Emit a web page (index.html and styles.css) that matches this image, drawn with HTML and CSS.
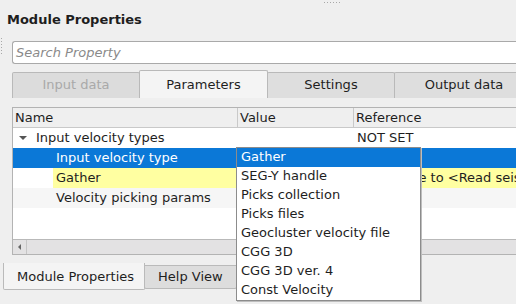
FILE: index.html
```html
<!DOCTYPE html>
<html>
<head>
<meta charset="utf-8">
<link rel="stylesheet" href="styles.css">
</head>
<body>
<div class="handle-top"></div>
<div class="handle-left"></div>
<div class="title">Module Properties</div>
<div class="search"><span class="placeholder">Search Property</span></div>
<div class="tabs">
  <div class="tab disabled">Input data</div>
  <div class="tab selected">Parameters</div>
  <div class="tab">Settings</div>
  <div class="tab last">Output data</div>
</div>
<div class="table">
  <div class="header">
    <div class="col c-name">Name</div>
    <div class="col c-value">Value</div>
    <div class="col c-ref">Reference</div>
  </div>
  <div class="row">
    <div class="col c-name"><span class="arrow"></span><span class="lvl1">Input velocity types</span></div>
    <div class="col c-value"></div>
    <div class="col c-ref">NOT SET</div>
  </div>
  <div class="row sel">
    <div class="col c-name"><span class="lvl2">Input velocity type</span></div>
    <div class="col c-value"></div>
    <div class="col c-ref"></div>
  </div>
  <div class="row">
    <div class="col c-name"><span class="lvl2 yellow-pad"></span><span class="yellow">Gather</span></div>
    <div class="col c-value yellow"></div>
    <div class="col c-ref yellow ref-link">Reference to &lt;Read seis</div>
  </div>
  <div class="row alt">
    <div class="col c-name"><span class="lvl2">Velocity picking params</span></div>
    <div class="col c-value"></div>
    <div class="col c-ref"></div>
  </div>
  <div class="spacer"></div>
  <div class="hscroll">
    <div class="sbtn"><span class="larrow"></span></div>
  </div>
</div>
<div class="btabs">
  <div class="btab selected">Module Properties</div>
  <div class="btab">Help View</div>
  <div class="btab hidden-tab"></div>
</div>
<ul class="popup">
  <li class="hl">Gather</li>
  <li>SEG-Y handle</li>
  <li>Picks collection</li>
  <li>Picks files</li>
  <li>Geocluster velocity file</li>
  <li>CGG 3D</li>
  <li>CGG 3D ver. 4</li>
  <li>Const Velocity</li>
</ul>
</body>
</html>
```

FILE: styles.css
```css
html, body {
  margin: 0;
  padding: 0;
}
body {
  width: 516px;
  height: 304px;
  overflow: hidden;
  position: relative;
  background: #efefef;
  font-family: "DejaVu Sans", "Liberation Sans", sans-serif;
  font-size: 13px;
  color: #1e1e1e;
}
.handle-top {
  position: absolute;
  left: 324px;
  top: 2px;
  width: 17px;
  height: 1px;
  background: repeating-linear-gradient(90deg, #a8a8a8 0 1px, transparent 1px 3px);
}
.handle-left {
  position: absolute;
  left: 1px;
  top: 38px;
  width: 1px;
  height: 17px;
  background: repeating-linear-gradient(180deg, #a8a8a8 0 1px, transparent 1px 3px);
}
.title {
  padding: 12px 0 0 7px;
  font-weight: bold;
  line-height: 15px;
  height: 15px;
}
.search {
  margin: 14px 0 0 12px;
  width: 504px;
  height: 23px;
  box-sizing: border-box;
  border: 1px solid #a9a9a9;
  border-right: none;
  border-radius: 3px 0 0 3px;
  background: #fff;
  line-height: 21px;
  padding-left: 3px;
}
.placeholder {
  font-style: italic;
  color: #8a8a8a;
}
.tabs {
  display: flex;
  align-items: flex-end;
  margin: 6px 0 0 12px;
  height: 28px;
  width: 504px;
  overflow: hidden;
}
.tab {
  width: 128px;
  height: 26px;
  box-sizing: border-box;
  border: 1px solid #b9b9b9;
  border-bottom: none;
  border-radius: 2px 2px 0 0;
  background: #dedede;
  text-align: center;
  line-height: 24px;
  margin-right: -1px;
  flex: none;
}
.tab.disabled {
  color: #a9a9a9;
  background: #dcdcdc;
}
.tab.selected {
  height: 28px;
  width: 129px;
  background: #f4f4f4;
  line-height: 27px;
  position: relative;
  z-index: 1;
}
.tab.last {
  width: 140px;
}
.table {
  margin: 9px 0 0 12px;
  width: 504px;
  height: 148px;
  box-sizing: border-box;
  border: 1px solid #b3b3b3;
  border-right: none;
  background: #fff;
  display: flex;
  flex-direction: column;
  overflow: hidden;
}
.header {
  display: flex;
  height: 20px;
  box-sizing: border-box;
  border-bottom: 1px solid #c9c9c9;
  background: #efefef;
  line-height: 19px;
  flex: none;
}
.header .col {
  padding-left: 2px;
}
.header .c-name, .header .c-value {
  border-right: 1px solid #c9c9c9;
}
.col {
  box-sizing: border-box;
  white-space: nowrap;
  overflow: hidden;
  flex: none;
}
.c-name { width: 225px; }
.c-value { width: 116px; }
.c-ref { width: 162px; padding-left: 3px; }
.row {
  display: flex;
  height: 20px;
  line-height: 20px;
  flex: none;
}
.row .c-name {
  display: flex;
  align-items: center;
}
.row.alt { background: #f6f6f6; }
.row.sel { background: #0b78d7; color: #fff; }
.arrow {
  width: 0;
  height: 0;
  margin-left: 6px;
  border-left: 4px solid transparent;
  border-right: 4px solid transparent;
  border-top: 4px solid #555;
}
.lvl1 { margin-left: 9px; }
.lvl2 { margin-left: 43px; }
.yellow-pad {
  width: 0;
  margin-left: 40px;
}
.yellow {
  background: #ffffa1;
  height: 20px;
}
span.yellow {
  flex: 1;
  padding-left: 3px;
}
.ref-link {
  padding-left: 7px;
}
.spacer { flex: 1; }
.hscroll {
  height: 14px;
  border-top: 1px solid #b9b9b9;
  background: #e3e2e3;
  flex: none;
  display: flex;
}
.sbtn {
  width: 13px;
  height: 14px;
  border-right: 1px solid #c6c6c6;
  display: flex;
  align-items: center;
  justify-content: center;
}
.larrow {
  width: 0;
  height: 0;
  border-top: 3px solid transparent;
  border-bottom: 3px solid transparent;
  border-right: 3px solid #666;
}
.btabs {
  display: flex;
  align-items: flex-start;
  margin: 8px 0 0 3px;
}
.btab {
  height: 24px;
  box-sizing: border-box;
  border: 1px solid #bababa;
  border-radius: 0 0 2px 2px;
  background: #dddddd;
  line-height: 22px;
  padding: 0 13px;
  margin-top: 2px;
  margin-right: -1px;
  white-space: nowrap;
  flex: none;
}
.btab.selected {
  height: 27px;
  margin-top: 0;
  border-top: none;
  background: #f4f4f4;
  line-height: 27px;
  width: 142px;
  padding-left: 13px;
  position: relative;
  z-index: 1;
}
.btab.hidden-tab {
  width: 80px;
}
.popup {
  position: absolute;
  left: 236px;
  top: 147px;
  width: 183px;
  margin: 0;
  padding: 0;
  list-style: none;
  background: #fff;
  border: 1px solid #8c8c8c;
  box-shadow: 1px 1px 0 #bdbdbd;
  z-index: 5;
}
.popup li {
  height: 19px;
  line-height: 18px;
  padding-left: 4px;
  white-space: nowrap;
}
.popup li.hl {
  background: #0b78d7;
  color: #fff;
}
```
